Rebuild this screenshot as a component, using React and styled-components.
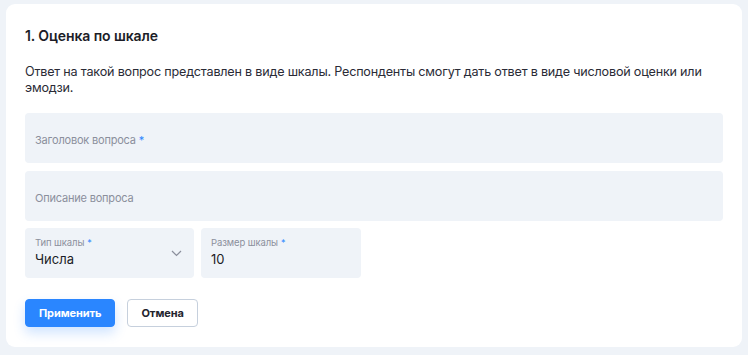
import React from "react";
import styled, { createGlobalStyle } from "styled-components";

const GlobalStyle = createGlobalStyle`
    html, body {
        margin: 0;
        padding: 0;
        background: #eff3f8;
        font-family: Inter, "Noto Sans", sans-serif;
    }
`;

const Page = styled.div`
    padding: 4px 6px 8px 6px;
    width: 748px;
    box-sizing: border-box;
`;

const Card = styled.div`
    background: #ffffff;
    border-radius: 9px;
    padding: 22px 19px 20px 19px;
    height: 343px;
    box-sizing: border-box;
`;

const Title = styled.h3`
    margin: 0;
    font-size: 14px;
    font-weight: 600;
    color: #1c1d27;
    line-height: 20px;
    letter-spacing: -0.1px;
`;

const Description = styled.p`
    margin: 18px 0 0 0;
    font-size: 12.6px;
    letter-spacing: -0.2px;
    line-height: 16px;
    color: #2a2b36;
    padding-right: 20px;
`;

const Fields = styled.div`
    margin-top: 17px;
    display: flex;
    flex-direction: column;
    gap: 8px;
`;

const Field = styled.div`
    background: #eff3f8;
    border-radius: 4px;
    height: 50px;
    display: flex;
    align-items: center;
    padding: 4px 10px 0 10px;
    box-sizing: border-box;
    font-size: 11px;
    letter-spacing: -0.2px;
    color: #8b8f9c;
`;

const Star = styled.span`
    color: #2a86ff;
    margin-left: 3px;
    font-size: ${(p) => (p.small ? "9px" : "11px")};
    vertical-align: top;
`;

const Row = styled.div`
    display: flex;
    gap: 7px;
    margin-top: -1px;
`;

const SmallField = styled.div`
    background: #eff3f8;
    border-radius: 4px;
    height: 50px;
    width: ${(p) => p.w}px;
    box-sizing: border-box;
    padding: 8px 10px 0 10px;
    display: flex;
    align-items: flex-start;
    justify-content: space-between;
`;

const FieldText = styled.div`
    display: flex;
    flex-direction: column;
`;

const Label = styled.span`
    font-size: 9.5px;
    letter-spacing: -0.1px;
    color: #8b8f9c;
    line-height: 14px;
`;

const Value = styled.span`
    font-size: 13px;
    color: #1c1d27;
    line-height: 18px;
`;

const Chevron = styled.svg`
    margin-top: 14px;
    margin-right: 2px;
`;

const Actions = styled.div`
    display: flex;
    gap: 12px;
    margin-top: 21px;
`;

const Button = styled.button`
    height: 28px;
    padding: 0 13px;
    border-radius: 4px;
    font-family: Inter, "Noto Sans", sans-serif;
    font-size: 11px;
    font-weight: 700;
    letter-spacing: -0.1px;
    cursor: pointer;
    background: ${(p) => (p.primary ? "#2a86ff" : "#ffffff")};
    color: ${(p) => (p.primary ? "#ffffff" : "#23242e")};
    border: 1px solid ${(p) => (p.primary ? "#2a86ff" : "#c6d0dd")};
    box-shadow: ${(p) => (p.primary ? "0 6px 12px rgba(42, 134, 255, 0.22)" : "none")};
`;

const App = () => {
    return (
        <Page>
            <GlobalStyle />
            <Card>
                <Title>1. Оценка по шкале</Title>
                <Description>
                    Ответ на такой вопрос представлен в виде шкалы. Респонденты смогут дать ответ в виде числовой оценки или эмодзи.
                </Description>
                <Fields>
                    <Field>
                        Заголовок вопроса<Star>*</Star>
                    </Field>
                    <Field>Описание вопроса</Field>
                    <Row>
                        <SmallField w={169}>
                            <FieldText>
                                <Label>
                                    Тип шкалы<Star small>*</Star>
                                </Label>
                                <Value>Числа</Value>
                            </FieldText>
                            <Chevron width="11" height="7" viewBox="0 0 11 7" fill="none">
                                <path d="M1 1l4.5 4.5L10 1" stroke="#8b8f9c" strokeWidth="1.2" />
                            </Chevron>
                        </SmallField>
                        <SmallField w={160}>
                            <FieldText>
                                <Label>
                                    Размер шкалы<Star small>*</Star>
                                </Label>
                                <Value>10</Value>
                            </FieldText>
                        </SmallField>
                    </Row>
                </Fields>
                <Actions>
                    <Button primary>Применить</Button>
                    <Button>Отмена</Button>
                </Actions>
            </Card>
        </Page>
    );
};

export default App;
